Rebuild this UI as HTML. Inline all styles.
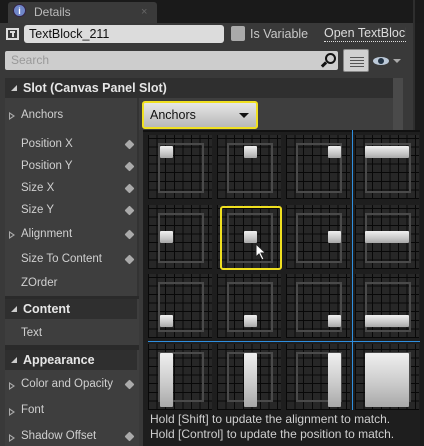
<!DOCTYPE html>
<html><head><meta charset="utf-8"><style>
*{margin:0;padding:0;box-sizing:border-box}
body{width:424px;height:446px;overflow:hidden;background:#1b1b1b;font-family:"Liberation Sans",sans-serif;position:relative;color:#ccc}
.a{position:absolute}
.t{font-size:12px;color:#d2d2d2;white-space:nowrap}
.hdr{position:absolute;left:5px;width:132px;background:#2f2f2f;color:#e6e6e6;font-weight:bold;font-size:12.5px;padding-left:18px}
.hdr:before{content:"";position:absolute;left:6px;top:7px;border-left:6px solid transparent;border-bottom:6px solid #ccc}
.row{position:absolute;left:21px;font-size:11.5px;color:#d0d0d0}
.ar{position:absolute;left:9px;width:0;height:0;border-top:4px solid transparent;border-bottom:4px solid transparent;border-left:6px solid #aaa}
.ar:after{content:"";position:absolute;left:-5px;top:-2px;border-top:2px solid transparent;border-bottom:2px solid transparent;border-left:3px solid #3e3e3e}
.ic{position:absolute;left:126px;width:7px;height:7px;background:#aaa;transform:rotate(45deg);border-radius:1px}
.cell{position:absolute;width:64px;height:64px;background-color:#272727;
background-image:repeating-linear-gradient(0deg,#080808 0 1px,transparent 1px 8.6px),repeating-linear-gradient(90deg,#080808 0 1px,transparent 1px 8.6px)}
.cell .in{position:absolute;left:10px;top:8px;width:46px;height:50px;border:2px solid #4a4a4a}
.cell .b{position:absolute;background:linear-gradient(#f0f0f0,#c8c8c8 60%,#a8a8a8);border-radius:1px}
</style></head><body>
<div class="a" style="left:0;top:0;width:424px;height:23px;background:#1a1a1a"></div>
<div class="a" style="left:8px;top:2px;width:149px;height:21px;background:#3a3a3a;border-radius:3px 3px 0 0"></div>
<div class="a" style="left:13px;top:4px;width:13px;height:13px;border-radius:50%;background:#6f86c8;border:1px solid #324;color:#fff;font-size:9px;text-align:center;line-height:12px;font-weight:bold">i</div>
<div class="a t" style="left:34px;top:5px;color:#bbb">Details</div>
<div class="a" style="left:141px;top:6px;color:#666;font-size:11px">×</div>
<div class="a" style="left:413px;top:0;width:2px;height:446px;background:#2e2e2e"></div>
<div class="a" style="left:0;top:23px;width:413px;height:423px;background:#393939"></div>
<div class="a" style="left:6px;top:28px;width:13px;height:12px;border:2px solid #ddd"></div>
<div class="a" style="left:10px;top:31px;width:5px;height:2px;background:#ddd"></div>
<div class="a" style="left:12px;top:31px;width:1.5px;height:6px;background:#ddd"></div>
<div class="a" style="left:24px;top:25px;width:200px;height:18px;background:#dcdcdc;border-radius:3px"></div>
<div class="a t" style="left:29px;top:27px;color:#111;font-size:12.5px">TextBlock_211</div>
<div class="a" style="left:231px;top:26px;width:14px;height:15px;background:#aaa;border-radius:2px"></div>
<div class="a t" style="left:250px;top:27px;color:#c8c8c8;font-size:12.5px">Is Variable</div>
<div class="a t" style="left:324px;top:26px;color:#ddd;font-size:12.5px;border-bottom:1px dotted #ddd;width:82px;overflow:hidden;padding-bottom:1px">Open TextBlock</div>
<div class="a" style="left:5px;top:51px;width:333px;height:19px;background:#cdcdcd;border-radius:2px"></div>
<div class="a t" style="left:11px;top:53px;color:#999;font-size:12px">Search</div>
<div class="a" style="left:325px;top:53px;width:11px;height:11px;border:2.5px solid #111;border-radius:50%"></div>
<div class="a" style="left:321px;top:63px;width:6px;height:3px;background:#111;transform:rotate(-45deg)"></div>
<div class="a" style="left:343px;top:49px;width:26px;height:23px;background:#d0d0d0;border:1px solid #888;border-radius:2px;
background-image:repeating-linear-gradient(0deg,#555 0 1px,transparent 1px 3px);background-size:14px 12px;background-position:6px 5px;background-repeat:no-repeat"></div>
<div class="a" style="left:373px;top:57px;width:16px;height:8px;background:#bcc9d8;border-radius:50%"></div>
<div class="a" style="left:378px;top:58px;width:6px;height:6px;background:#234;border-radius:50%"></div>
<div class="a" style="left:393px;top:59px;border-left:4px solid transparent;border-right:4px solid transparent;border-top:4px solid #aaa"></div>
<div class="a" style="left:5px;top:78px;width:134px;height:368px;background:#3e3e3e"></div>
<div class="a" style="left:137px;top:98px;width:2px;height:200px;background:#333"></div>
<div class="a" style="left:139px;top:78px;width:264px;height:52px;background:#3e3e3e"></div>
<div class="a" style="left:393px;top:78px;width:10px;height:52px;background:#4a4a4a"></div>
<div class="hdr" style="top:78px;height:20px;line-height:20px;width:388px">Slot (Canvas Panel Slot)</div>
<div class="ar" style="top:112px"></div><div class="row" style="top:109px">Anchors</div>
<div class="a" style="left:142px;top:101px;width:116px;height:28px;border:2px solid #f0e020;border-radius:3px;background:linear-gradient(#e6e6e6,#b8b8b8)"></div>
<div class="a t" style="left:150px;top:108px;color:#111;font-size:12.5px">Anchors</div>
<div class="a" style="left:239px;top:113px;border-left:5px solid transparent;border-right:5px solid transparent;border-top:5px solid #111"></div>
<div class="row" style="top:138px">Position X</div><div class="ic" style="top:141px"></div>
<div class="row" style="top:160px">Position Y</div><div class="ic" style="top:163px"></div>
<div class="row" style="top:182px">Size X</div><div class="ic" style="top:185px"></div>
<div class="row" style="top:204px">Size Y</div><div class="ic" style="top:207px"></div>
<div class="ar" style="top:231px"></div><div class="row" style="top:228px">Alignment</div><div class="ic" style="top:231px"></div>
<div class="row" style="top:253px">Size To Content</div><div class="ic" style="top:256px"></div>
<div class="row" style="top:277px">ZOrder</div>
<div class="a" style="left:5px;top:296px;width:134px;height:3px;background:#2a2a2a"></div>
<div class="hdr" style="top:299px;height:20px;line-height:20px">Content</div>
<div class="row" style="top:327px">Text</div>
<div class="a" style="left:5px;top:345px;width:134px;height:5px;background:#2a2a2a"></div>
<div class="hdr" style="top:350px;height:20px;line-height:20px">Appearance</div>
<div class="ar" style="top:382px"></div><div class="row" style="top:378px">Color and Opacity</div><div class="ic" style="top:381px"></div>
<div class="ar" style="top:408px"></div><div class="row" style="top:404px">Font</div>
<div class="ar" style="top:434px"></div><div class="row" style="top:430px">Shadow Offset</div><div class="ic" style="top:433px"></div>
<div class="a" style="left:143px;top:130px;width:277px;height:316px;background:#1e1e1e;border-top:2px solid #111"></div>
<div class="cell" style="left:148px;top:135px"><div class="in"></div><div class="b" style="left:12px;top:11px;width:13px;height:12px"></div></div>
<div class="cell" style="left:217px;top:135px"><div class="in"></div><div class="b" style="left:27px;top:11px;width:13px;height:12px"></div></div>
<div class="cell" style="left:286px;top:135px"><div class="in"></div><div class="b" style="left:42px;top:11px;width:13px;height:12px"></div></div>
<div class="cell" style="left:355px;top:135px"><div class="in"></div><div class="b" style="left:10px;top:11px;width:44px;height:12px"></div></div>
<div class="cell" style="left:148px;top:205px"><div class="in"></div><div class="b" style="left:12px;top:26px;width:13px;height:12px"></div></div>
<div class="cell" style="left:217px;top:205px"><div class="in"></div><div class="b" style="left:27px;top:26px;width:13px;height:12px"></div></div>
<div class="cell" style="left:286px;top:205px"><div class="in"></div><div class="b" style="left:42px;top:26px;width:13px;height:12px"></div></div>
<div class="cell" style="left:355px;top:205px"><div class="in"></div><div class="b" style="left:10px;top:26px;width:44px;height:12px"></div></div>
<div class="cell" style="left:148px;top:274px"><div class="in"></div><div class="b" style="left:12px;top:41px;width:13px;height:12px"></div></div>
<div class="cell" style="left:217px;top:274px"><div class="in"></div><div class="b" style="left:27px;top:41px;width:13px;height:12px"></div></div>
<div class="cell" style="left:286px;top:274px"><div class="in"></div><div class="b" style="left:42px;top:41px;width:13px;height:12px"></div></div>
<div class="cell" style="left:355px;top:274px"><div class="in"></div><div class="b" style="left:10px;top:41px;width:44px;height:12px"></div></div>
<div class="cell" style="left:148px;top:344px;height:66px"><div class="in"></div><div class="b" style="left:12px;top:9px;width:13px;height:54px"></div></div>
<div class="cell" style="left:217px;top:344px;height:66px"><div class="in"></div><div class="b" style="left:27px;top:9px;width:13px;height:54px"></div></div>
<div class="cell" style="left:286px;top:344px;height:66px"><div class="in"></div><div class="b" style="left:42px;top:9px;width:13px;height:54px"></div></div>
<div class="cell" style="left:355px;top:344px;height:66px"><div class="in"></div><div class="b" style="left:10px;top:9px;width:44px;height:54px"></div></div>
<div class="a" style="left:352px;top:130px;width:1px;height:280px;background:#2f8fdf"></div>
<div class="a" style="left:148px;top:341px;width:272px;height:1px;background:#2f8fdf"></div>
<div class="a" style="left:220px;top:206px;width:62px;height:64px;border:2px solid #f0e020;border-radius:3px"></div>
<svg class="a" style="left:255px;top:243px" width="12" height="18" viewBox="0 0 12 18"><path d="M1 1 L1 14 L4 11 L7 17 L9 16 L6 10 L10.5 10 Z" fill="#fff" stroke="#222" stroke-width="1"/></svg>
<div class="a" style="left:143px;top:410px;width:277px;height:36px;background:#1e1e1e"></div>
<div class="a t" style="left:150px;top:412px;color:#cfcfcf;font-size:12px;line-height:15px">Hold [Shift] to update the alignment to match.<br>Hold [Control] to update the position to match.</div>
</body></html>
